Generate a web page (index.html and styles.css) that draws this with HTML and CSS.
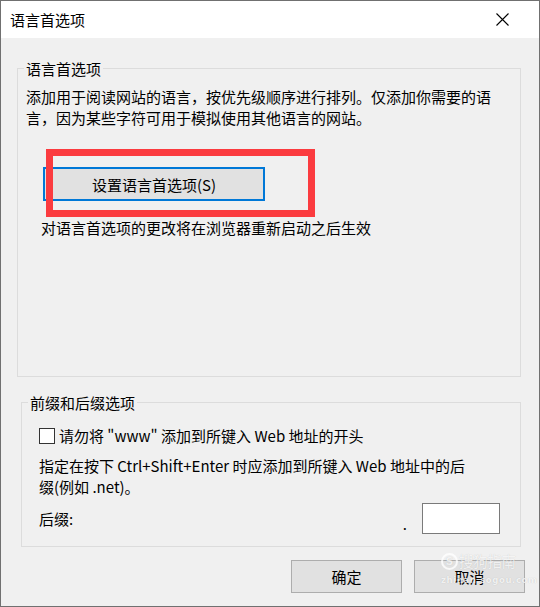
FILE: index.html
```html
<!DOCTYPE html>
<html lang="zh-CN">
<head>
<meta charset="utf-8">
<title>语言首选项</title>
<link rel="stylesheet" href="styles.css">
</head>
<body>
<div class="window">
  <div class="titlebar">
    <span class="title">语言首选项</span>
    <svg class="close" width="13" height="13" viewBox="0 0 13 13"><path d="M0.5 0.5L12.5 12.5M12.5 0.5L0.5 12.5" stroke="#000" stroke-width="1.1" fill="none"/></svg>
  </div>
  <div class="body">
    <fieldset class="group g1">
      <legend>语言首选项</legend>
      <p class="desc">添加用于阅读网站的语言，按优先级顺序进行排列。仅添加你需要的语<br>言，因为某些字符可用于模拟使用其他语言的网站。</p>
      <button class="btn btn-lang" type="button">设置语言首选项(S)</button>
      <p class="note">对语言首选项的更改将在浏览器重新启动之后生效</p>
    </fieldset>
    <fieldset class="group g2">
      <legend>前缀和后缀选项</legend>
      <label class="check"><span class="box"></span><span>请勿将 "www" 添加到所键入 Web 地址的开头</span></label>
      <p class="desc2">指定在按下 Ctrl+Shift+Enter 时应添加到所键入 Web 地址中的后<br>缀(例如 .net)。</p>
      <div class="suffix-row"><span class="lbl">后缀:</span><span class="dot">.</span><span class="input"></span></div>
    </fieldset>
    <div class="actions">
      <button class="btn btn-act" type="button">确定</button>
      <button class="btn btn-act" type="button">取消</button>
    </div>
  </div>
  <div class="annot"></div>
  <div class="watermark">
    <div class="wm-top"><span class="wm-s">S</span><span class="wm-name">搜狗指南</span></div>
    <div class="wm-url">zhinan.sogou.com</div>
  </div>
</div>
</body>
</html>
```
FILE: styles.css
```css
* { box-sizing: border-box; }
html, body { margin: 0; padding: 0; background: #f0f0f0; }
body {
  font-family: "Noto Sans CJK SC", "Noto Sans", sans-serif;
  font-size: 15px;
  color: #000;
}
.window {
  position: relative;
  width: 540px;
  height: 607px;
  border: 1px solid #707070;
  background: #f0f0f0;
  display: flex;
  flex-direction: column;
}
.titlebar {
  height: 37px;
  flex: none;
  background: #fff;
  display: flex;
  align-items: center;
  justify-content: space-between;
  padding: 0 30px 0 9px;
}
.title { line-height: 21px; }
.close { display: block; }
.body {
  flex: 1;
  display: flex;
  flex-direction: column;
}
.group {
  border: 1px solid #dcdcdc;
  margin: 0;
  padding: 0;
  min-width: 0;
}
.group legend {
  padding: 0 2px;
  line-height: 21px;
}
.g1 {
  margin: 20px 0 0 16px;
  width: 504px;
  height: 319px;
  padding: 7px 8px 0;
}
.g1 legend { margin-left: -2px; }
.desc, .desc2, .note { margin: 0; line-height: 21px; }
.btn {
  font: inherit;
  color: #000;
  padding: 0;
  background: #e1e1e1;
}
.btn-lang {
  display: block;
  margin: 39px 0 0 17px;
  width: 222px;
  height: 34px;
  border: 2px solid #0078d7;
}
.note { margin: 16px 0 0 15px; }
.g2 {
  margin: 15px 0 0 20px;
  width: 500px;
  height: 155px;
  padding: 12px 20px 0 17px;
}
.g2 legend { margin-left: -11px; }
.check {
  display: flex;
  align-items: center;
  line-height: 21px;
}
.box {
  width: 16px;
  height: 16px;
  border: 1px solid #333;
  background: #fff;
  margin-right: 4px;
  flex: none;
}
.desc2 { margin-top: 9px; }
.suffix-row {
  display: flex;
  align-items: center;
  margin-top: 6px;
  height: 31px;
}
.lbl { line-height: 21px; }
.dot {
  margin-left: auto;
  margin-right: 15px;
  align-self: flex-end;
  line-height: 21px;
}
.input {
  width: 78px;
  height: 31px;
  border: 1px solid #7a7a7a;
  background: #fff;
}
.actions {
  display: flex;
  justify-content: flex-end;
  gap: 12px;
  margin-top: 13px;
  padding-right: 14px;
}
.btn-act {
  width: 111px;
  height: 33px;
  border: 1px solid #adadad;
}
.annot {
  position: absolute;
  left: 45px;
  top: 148px;
  width: 269px;
  height: 68px;
  border: 7px solid #fb3b3f;
}
.watermark {
  position: absolute;
  left: 440px;
  top: 551px;
  color: rgba(255, 255, 255, 0.78);
  text-shadow: 0 0 1px rgba(0, 0, 0, 0.18);
}
.wm-top { display: flex; align-items: center; gap: 1px; }
.wm-s {
  width: 17px;
  height: 17px;
  border-radius: 50%;
  border: 2px solid rgba(255, 255, 255, 0.78);
  display: flex;
  align-items: center;
  justify-content: center;
  font-family: "DejaVu Sans", sans-serif;
  font-weight: bold;
  font-size: 11px;
  line-height: 1;
}
.wm-name { font-size: 14.5px; line-height: 18px; letter-spacing: -0.3px; }
.wm-url {
  font-family: "DejaVu Sans", sans-serif;
  font-weight: bold;
  font-size: 8.5px;
  letter-spacing: 0.6px;
  margin-top: 6px;
  line-height: 9px;
}
```
